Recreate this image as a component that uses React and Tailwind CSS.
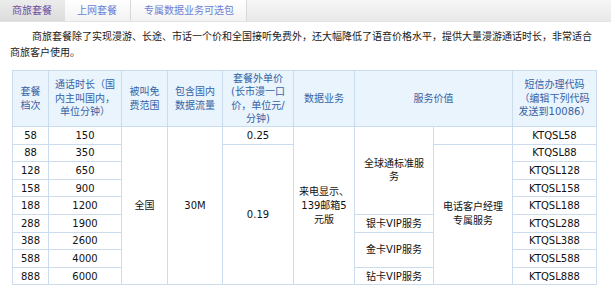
import React from "react";

const rows = [
  ["58", "150", "KTQSL58"],
  ["88", "350", "KTQSL88"],
  ["128", "650", "KTQSL128"],
  ["158", "900", "KTQSL158"],
  ["188", "1200", "KTQSL188"],
  ["288", "1900", "KTQSL288"],
  ["388", "2600", "KTQSL388"],
  ["588", "4000", "KTQSL588"],
  ["888", "6000", "KTQSL888"],
];

const th = "border border-[#cadcee] bg-[#eaf4fc] text-[#3563a6] font-normal text-center align-middle leading-[13.5px] px-[2px]";
const td = "border border-[#cadcee] text-center align-middle h-[17.6px] p-0 text-[#111]";

export default function App() {
  return (
    <div className="w-[611px] h-[295px] bg-white overflow-hidden font-['DejaVu_Sans','Noto_Sans_CJK_SC',sans-serif] text-[10px]">
      {/* tabs */}
      <div className="flex h-[22px] bg-gradient-to-b from-[#f6f6f6] to-[#e8e8e8] border-b border-[#e2e2e2]">
        <div className="w-[65px] flex items-center pl-[12px] bg-gradient-to-b from-[#ececec] to-[#dcdcdc] text-[#6a4fa3]">
          商旅套餐
        </div>
        <div className="w-[66px] flex items-center pl-[12px] bg-gradient-to-b from-[#ffffff] to-[#f2f2f2] border-r border-[#d9d9d9] text-[#6c7fd6]">
          上网套餐
        </div>
        <div className="w-[116px] flex items-center pl-[13px] bg-gradient-to-b from-[#ffffff] to-[#f2f2f2] border-r border-[#d9d9d9] text-[#6c7fd6]">
          专属数据业务可选包
        </div>
      </div>

      {/* intro */}
      <p className="mt-[7px] pl-[10px] leading-[16px] text-[#1a1a1a] whitespace-nowrap">
        <span className="pl-[22px]">商旅套餐除了实现漫游、长途、市话一个价和全国接听免费外，还大幅降低了语音价格水平，提供大量漫游通话时长，非常适合</span>
        <br />
        商旅客户使用。
      </p>

      {/* table */}
      <table className="ml-[12px] mt-[9px] w-[584px] border-collapse table-fixed">
        <colgroup>
          <col className="w-[36px]" />
          <col className="w-[73px]" />
          <col className="w-[46px]" />
          <col className="w-[55px]" />
          <col className="w-[71px]" />
          <col className="w-[61px]" />
          <col className="w-[79px]" />
          <col className="w-[79px]" />
          <col className="w-[84px]" />
        </colgroup>
        <thead>
          <tr className="h-[56px]">
            <th className={th}>套餐<br />档次</th>
            <th className={th}>通话时长（国<br />内主叫国内，<br />单位分钟）</th>
            <th className={th}>被叫免<br />费范围</th>
            <th className={th}>包含国内<br />数据流量</th>
            <th className={th}>套餐外单价<br />(长市漫一口<br />价，单位元/<br />分钟)</th>
            <th className={th}>数据业务</th>
            <th className={th} colSpan={2}>服务价值</th>
            <th className={th}>短信办理代码<br />（编辑下列代码<br />发送到10086）</th>
          </tr>
        </thead>
        <tbody>
          {rows.map(([tier, mins, code], i) => (
            <tr key={tier}>
              <td className={td}>{tier}</td>
              <td className={td}>{mins}</td>
              {i === 0 && (
                <>
                  <td className={td} rowSpan={9}>全国</td>
                  <td className={td} rowSpan={9}>30M</td>
                  <td className={td}>0.25</td>
                  <td className={`${td} leading-[14px]`} rowSpan={9}>来电显示、<br />139邮箱5<br />元版</td>
                  <td className={`${td} leading-[13px]`} rowSpan={5}>全球通标准服<br />务</td>
                  <td className={td}></td>
                </>
              )}
              {i === 1 && (
                <>
                  <td className={td} rowSpan={8}>0.19</td>
                  <td className={`${td} leading-[14px]`} rowSpan={8}>电话客户经理<br />专属服务</td>
                </>
              )}
              {i === 5 && <td className={td}>银卡VIP服务</td>}
              {i === 6 && <td className={td} rowSpan={2}>金卡VIP服务</td>}
              {i === 8 && <td className={td}>钻卡VIP服务</td>}
              <td className={td}>{code}</td>
            </tr>
          ))}
        </tbody>
      </table>
    </div>
  );
}
